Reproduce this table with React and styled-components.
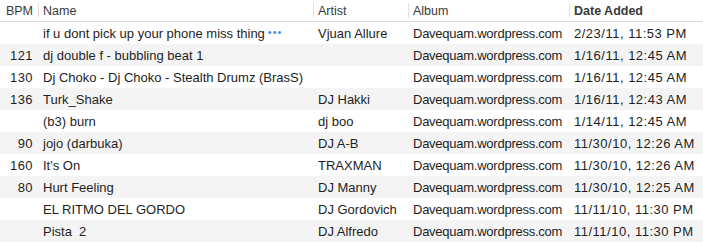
import React from "react";
import styled, { createGlobalStyle } from "styled-components";

const Global = createGlobalStyle`
  html, body { margin: 0; padding: 0; background: #fff; }
  body { font-family: "Liberation Sans", Arial, sans-serif; }
`;

const cols = "38px 275px 95px 161px 1fr";

const Table = styled.div`
  width: 703px;
  font-size: 13px;
  color: #1e1e1e;
`;

const Header = styled.div`
  display: grid;
  grid-template-columns: ${cols};
  height: 22px;
  box-sizing: border-box;
  border-bottom: 1px solid #dcdcdc;
  background: #fff;
`;

const HeadCell = styled.div`
  position: relative;
  display: flex;
  align-items: center;
  justify-content: ${(p) => (p.$right ? "flex-end" : "flex-start")};
  padding: 0 ${(p) => (p.$right ? "5px" : "0")} 0 ${(p) => (p.$right ? "0" : "5px")};
  color: #3a3a3a;
  font-weight: ${(p) => (p.$bold ? 700 : 400)};
  font-size: 12.5px;
  white-space: nowrap;
  &::before {
    content: "";
    display: ${(p) => (p.$first ? "none" : "block")};
    position: absolute;
    left: 0;
    top: 3px;
    bottom: 3px;
    width: 1px;
    background: #e0e0e0;
  }
`;

const Row = styled.div`
  display: grid;
  grid-template-columns: ${cols};
  height: 22px;
  background: ${(p) => (p.$alt ? "#f4f4f4" : "#fff")};
`;

const Cell = styled.div`
  display: flex;
  align-items: center;
  justify-content: ${(p) => (p.$right ? "flex-end" : "flex-start")};
  padding: ${(p) => (p.$right ? "0 5px 0 0" : "0 0 0 5px")};
  white-space: pre;
  overflow: hidden;
  letter-spacing: ${(p) => p.$ls || "0"};
`;

const Dots = styled.span`
  color: #3d8ef0;
  font-size: 11px;
  letter-spacing: 1px;
  margin-left: 3px;
  position: relative;
  top: -1px;
`;

const rows = [
  ["", "if u dont pick up your phone miss thing", "Vjuan Allure", "Davequam.wordpress.com", "2/23/11, 11:53 PM", true],
  ["121", "dj double f - bubbling beat 1", "", "Davequam.wordpress.com", "1/16/11, 12:45 AM"],
  ["130", "Dj Choko - Dj Choko - Stealth Drumz (BrasS)", "", "Davequam.wordpress.com", "1/16/11, 12:45 AM"],
  ["136", "Turk_Shake", "DJ Hakki", "Davequam.wordpress.com", "1/16/11, 12:43 AM"],
  ["", "(b3) burn", "dj boo", "Davequam.wordpress.com", "1/14/11, 12:45 AM"],
  ["90", "jojo (darbuka)", "DJ A-B", "Davequam.wordpress.com", "11/30/10, 12:26 AM"],
  ["160", "It's On", "TRAXMAN", "Davequam.wordpress.com", "11/30/10, 12:26 AM"],
  ["80", "Hurt Feeling", "DJ Manny", "Davequam.wordpress.com", "11/30/10, 12:25 AM"],
  ["", "EL RITMO DEL GORDO", "DJ Gordovich", "Davequam.wordpress.com", "11/11/10, 11:30 PM"],
  ["", "Pista  2", "DJ Alfredo", "Davequam.wordpress.com", "11/11/10, 11:30 PM"],
];

export default function App() {
  return (
    <>
      <Global />
      <Table>
        <Header>
          <HeadCell $right $first>BPM</HeadCell>
          <HeadCell>Name</HeadCell>
          <HeadCell>Artist</HeadCell>
          <HeadCell>Album</HeadCell>
          <HeadCell $bold>Date Added</HeadCell>
        </Header>
        {rows.map((r, i) => (
          <Row key={i} $alt={i % 2 === 1}>
            <Cell $right $ls="0.4px">{r[0]}</Cell>
            <Cell>
              {r[1]}
              {r[5] && <Dots>•••</Dots>}
            </Cell>
            <Cell>{r[2]}</Cell>
            <Cell $ls="-0.25px">{r[3]}</Cell>
            <Cell $ls="0.5px">{r[4]}</Cell>
          </Row>
        ))}
      </Table>
    </>
  );
}
